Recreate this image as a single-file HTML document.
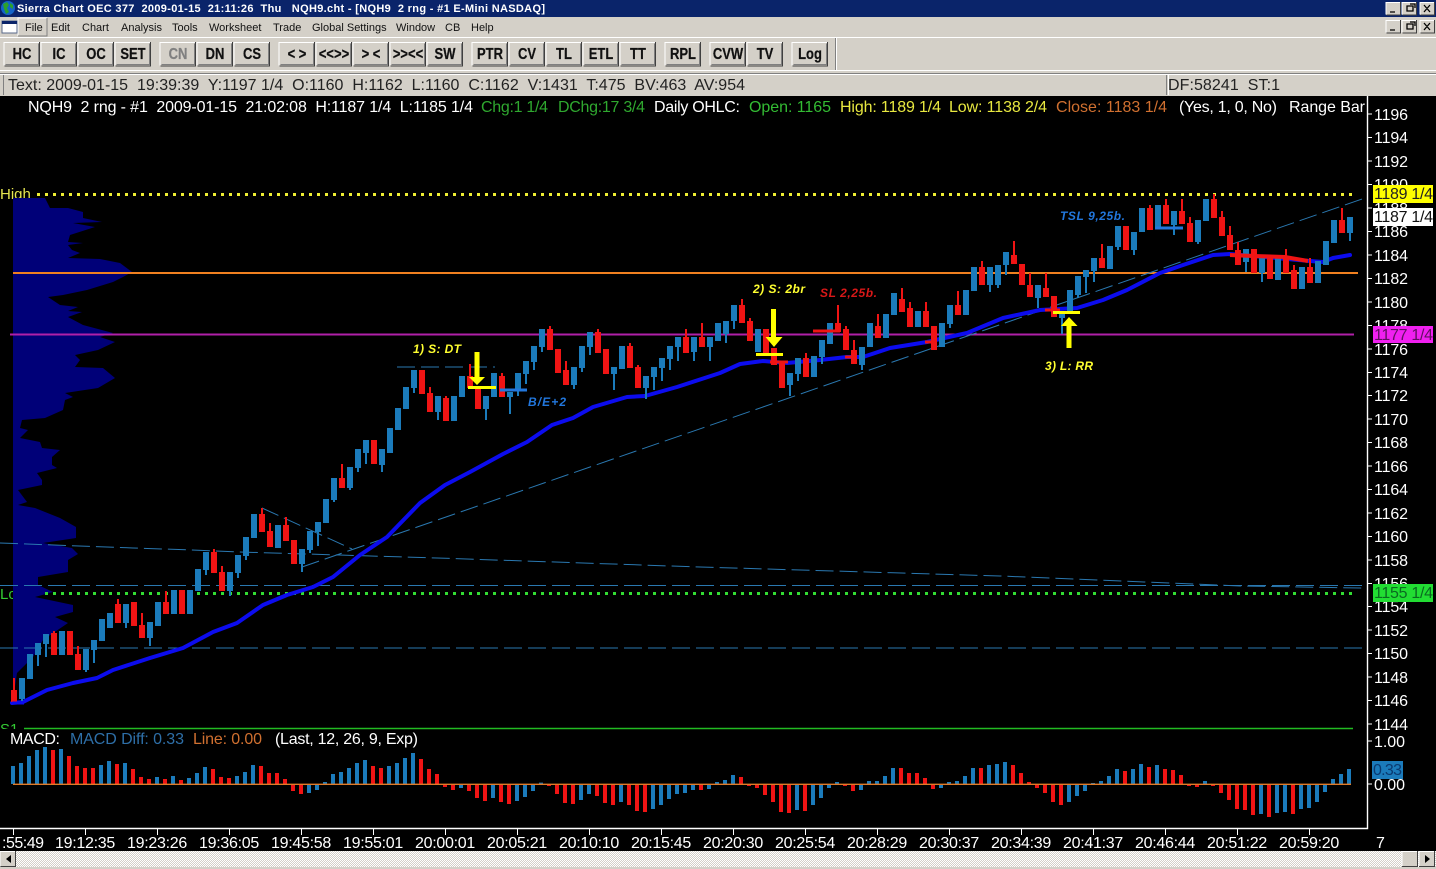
<!DOCTYPE html>
<html><head><meta charset="utf-8"><title>Sierra Chart</title>
<style>
html,body{margin:0;padding:0;background:#000;overflow:hidden}
svg{display:block}
text{font-family:"Liberation Sans",sans-serif;white-space:pre}
.c{font-size:16px;fill:#fff}
.m{font-size:11px;fill:#111}
.b{font-size:13px;font-weight:bold;fill:#111;stroke:#111;stroke-width:.2px;text-anchor:middle}
.a{font-size:12px;font-weight:bold;font-style:italic}
.t{font-size:16px;fill:#fff;text-anchor:middle;letter-spacing:-.28px}
.p{font-size:16px;fill:#fff}
</style></head><body>
<svg width="1436" height="869" viewBox="0 0 1436 869" xmlns="http://www.w3.org/2000/svg">
<defs>
<g id="btn"><rect width="36" height="24" fill="#d4d0c8"/><path d="M0 23.5V.5H35" fill="none" stroke="#fff"/><path d="M.5 24H35.5V0" fill="none" stroke="#404040"/><path d="M1.5 22.5H34.5V1.5" fill="none" stroke="#808080"/></g>
<g id="wb"><rect width="15" height="13" fill="#d4d0c8"/><path d="M0 12.5V.5H14" fill="none" stroke="#fff"/><path d="M.5 13H14.5V0" fill="none" stroke="#404040"/></g>
<pattern id="dith" width="2" height="2" patternUnits="userSpaceOnUse"><rect width="2" height="2" fill="#d4d0c8"/><rect width="1" height="1" fill="#fff"/><rect x="1" y="1" width="1" height="1" fill="#fff"/></pattern>
</defs>

<!-- chrome -->
<rect width="1436" height="96" fill="#d4d0c8"/>
<rect width="1436" height="17" fill="#0a246a"/>
<circle cx="8" cy="8" r="7" fill="#1464c8"/><path d="M3 4l4-2 2 3-2 3 2 4-3 2-2-5zM10 3l3 2 0 4-3-2z" fill="#2ca02c"/>
<text x="17" y="12" font-size="11" font-weight="bold" fill="#fff" textLength="528">Sierra Chart OEC 377  2009-01-15  21:11:26  Thu   NQH9.cht - [NQH9  2 rng - #1 E-Mini NASDAQ]</text>
<use href="#wb" x="1386" y="2"/><use href="#wb" x="1402" y="2"/><use href="#wb" x="1420" y="2"/>
<path d="M1390 12h5M1407 6h6v5h-6zM1410 4h5v4M1424 5l6 7M1430 5l-6 7" stroke="#000" stroke-width="1.3" fill="none"/>
<use href="#wb" x="1386" y="20"/><use href="#wb" x="1402" y="20"/><use href="#wb" x="1420" y="20"/>
<path d="M1390 30h5M1407 24h6v5h-6zM1410 22h5v4M1424 23l6 7M1430 23l-6 7" stroke="#000" stroke-width="1.3" fill="none"/>
<!-- menu -->
<rect x="2" y="21" width="15" height="12" fill="#fff" stroke="#5a6a8a"/><rect x="2" y="21" width="15" height="3" fill="#0a246a"/>
<path d="M18 36V18H47" fill="none" stroke="#fff"/><path d="M47 18V36H18" fill="none" stroke="#808080"/>
<text class="m" x="25" y="31">File</text><text class="m" x="51" y="31">Edit</text><text class="m" x="82" y="31">Chart</text><text class="m" x="121" y="31">Analysis</text><text class="m" x="172" y="31">Tools</text><text class="m" x="209" y="31">Worksheet</text><text class="m" x="273" y="31">Trade</text><text class="m" x="312" y="31">Global Settings</text><text class="m" x="396" y="31">Window</text><text class="m" x="445" y="31">CB</text><text class="m" x="471" y="31">Help</text>
<rect y="37" width="1436" height="1" fill="#fff"/>
<!-- toolbar -->
<g>
<use href="#btn" x="4" y="42"/><use href="#btn" x="41" y="42"/><use href="#btn" x="78" y="42"/><use href="#btn" x="115" y="42"/>
<use href="#btn" x="160" y="42"/><use href="#btn" x="197" y="42"/><use href="#btn" x="234" y="42"/>
<use href="#btn" x="279" y="42"/><use href="#btn" x="316" y="42"/><use href="#btn" x="353" y="42"/><use href="#btn" x="390" y="42"/><use href="#btn" x="427" y="42"/>
<use href="#btn" x="472" y="42"/><use href="#btn" x="509" y="42"/><use href="#btn" x="546" y="42"/><use href="#btn" x="583" y="42"/><use href="#btn" x="620" y="42"/>
<use href="#btn" x="665" y="42"/><use href="#btn" x="710" y="42"/><use href="#btn" x="747" y="42"/><use href="#btn" x="792" y="42"/>
</g>
<g transform="scale(1,1.2)">
<text class="b" x="22" y="49.300">HC</text><text class="b" x="59" y="49.300">IC</text><text class="b" x="96" y="49.300">OC</text><text class="b" x="133" y="49.300">SET</text>
<text class="b" x="178" y="49.300" style="fill:#808080;stroke:#808080">CN</text><text class="b" x="215" y="49.300">DN</text><text class="b" x="252" y="49.300">CS</text>
<text class="b" x="297" y="49.300">&lt; &gt;</text><text class="b" x="334" y="49.300">&lt;&lt;&gt;&gt;</text><text class="b" x="371" y="49.300">&gt; &lt;</text><text class="b" x="408" y="49.300">&gt;&gt;&lt;&lt;</text><text class="b" x="445" y="49.300">SW</text>
<text class="b" x="490" y="49.300">PTR</text><text class="b" x="527" y="49.300">CV</text><text class="b" x="564" y="49.300">TL</text><text class="b" x="601" y="49.300">ETL</text><text class="b" x="638" y="49.300">TT</text>
<text class="b" x="683" y="49.300">RPL</text><text class="b" x="728" y="49.300">CVW</text><text class="b" x="765" y="49.300">TV</text><text class="b" x="810" y="49.300">Log</text>
</g>
<path d="M835.5 38V70" stroke="#808080"/><path d="M836.5 38V70" stroke="#fff"/>
<rect y="70" width="1436" height="1" fill="#fff"/><rect y="73" width="1436" height="1" fill="#808080"/><rect y="74" width="1436" height="1" fill="#fff"/>
<path d="M3.5 75V95" stroke="#808080"/><path d="M1166.5 75V95" stroke="#808080"/><path d="M1168.5 75V95" stroke="#fff"/>
<text x="8" y="90" font-size="16" fill="#222" textLength="737">Text: 2009-01-15  19:39:39  Y:1197 1/4  O:1160  H:1162  L:1160  C:1162  V:1431  T:475  BV:463  AV:954</text>
<text x="1168" y="90" font-size="16" fill="#222" textLength="112">DF:58241  ST:1</text>

<!-- chart bg -->
<rect y="96" width="1436" height="755" fill="#000"/>
<text x="0" y="199" font-size="15" fill="#e6e650">High</text>
<text x="0" y="599" font-size="15" fill="#33cc33">Lo</text>
<text x="0" y="734" font-size="15" fill="#33cc33">S1</text>
<rect x="0" y="729" width="24" height="10" fill="#000"/>
<!-- volume profile -->
<polygon fill="#000078" points="13,198 45,198 50,208 68,208 83,212 83,218 102,222 73,223 95,227 70,235 68,242 83,243 68,245 72,250 80,253 68,258 100,259 120,263 132,272 123,277 113,282 87,290 63,295 48,297 60,305 78,307 68,311 82,312 68,317 83,325 113,333 100,337 115,342 98,350 75,355 80,360 75,367 103,368 115,378 98,388 65,393 73,397 65,400 63,410 45,418 22,420 20,428 28,430 20,438 40,442 42,448 60,450 52,457 52,465 57,468 37,473 42,480 42,485 18,490 27,502 18,505 35,508 60,518 76,527 76,538 43,543 72,548 78,554 68,560 68,572 38,577 38,585 53,592 35,597 73,605 73,612 55,617 68,623 43,640 33,657 17,673 13,700"/>
<!-- horizontal levels -->
<path d="M37 194.5H1352" stroke="#eeee33" stroke-width="3" stroke-dasharray="3 5"/>
<path d="M13 273H1358" stroke="#f08020" stroke-width="2"/>
<path d="M10 334.5H1354" stroke="#b020a8" stroke-width="2"/>
<path d="M45 593.5H1352" stroke="#33dd33" stroke-width="3" stroke-dasharray="3 5"/>
<path d="M24 728.5H1353" stroke="#22bb22" stroke-width="1.5"/>
<!-- thin dashed lines -->
<g fill="none" stroke="#2a78b0" stroke-width="1" stroke-dasharray="18 6">
<path d="M302 567L1365 198"/>
<path d="M262 508L352 549" />
<path d="M0 543L133 548 192 550 240 552 437 558 700 567 1000 576 1240 586 1362 588"/>
<path d="M0 585.5H1362"/>
<path d="M0 648H1362"/>
<path d="M397 367H495"/>
</g>
<!-- EMA -->
<polyline fill="none" stroke="#0c0cee" stroke-width="4" stroke-linejoin="round" stroke-linecap="round" points="12,703 23,702 47,690 73,683 97,678 113,670 150,658 183,648 213,632 237,623 263,605 287,595 313,587 333,577 360,555 387,537 420,503 445,485 470,472 503,454 527,442 552,425 573,418 593,407 627,397 645,396 677,387 720,373 740,364 763,361 787,363 820,360 847,357 863,357 890,348 927,342 940,339 967,333 1003,318 1040,310 1077,308 1103,300 1127,290 1160,273 1183,265 1213,255 1230,254 1310,261 1323,262 1333,258 1350,255"/>
<!-- candles: wicks -->
<path fill="none" stroke="#1b7bbb" stroke-width="2" d="M22 699V701M38 655V666M46 644V657M86 670V672M94 650V663M126 623V628M150 638V646M206 570V575M230 591V596M238 573V578M246 556V560M302 564V572M310 550V553M318 532V546M334 500V502M350 488V490M358 468V472M366 453V464M382 465V472M414 388V393M438 412V420M486 409V420M510 397V414M518 390V396M526 374V384M534 362V370M542 347V352M574 385V389M582 368V372M590 347V355M614 374V390M646 388V399M654 377V390M662 368V381M670 359V370M678 347V361M694 352V361M710 347V361M726 334V343M734 321V329M790 385V396M798 374V381M822 357V364M862 365V370M950 324V328M990 285V292M998 285V288M1006 265V275M1038 298V308M1062 318V334M1078 295V298M1086 277V293M1094 271V282M1118 247V250M1134 250V255M1174 225V235M1198 242V244M1246 262V272M1262 273V282M1350 233V241"/>
<path fill="none" stroke="#f01414" stroke-width="2" d="M14 678V690M54 631V633M78 646V654M118 599V604M142 613V625M166 591V602M214 549V552M222 566V572M262 508V514M270 523V531M286 517V525M342 464V478M430 387V393M446 396V398M470 364V376M502 373V376M550 326V329M566 361V370M598 329V332M630 343V346M638 365V367M686 329V337M702 323V337M742 299V305M750 318V321M806 353V358M838 305V323M846 326V329M854 340V350M878 314V326M902 288V299M910 302V308M926 302V311M958 291V305M982 261V267M1014 241V255M1030 273V285M1046 273V288M1102 244V258M1150 205V208M1166 199V205M1182 199V211M1190 217V223M1214 194V199M1222 211V217M1230 226V235M1238 242V250M1286 249V258M1294 265V270M1310 258V267M1342 208V220"/>
<!-- candles: bodies -->
<path fill="none" stroke="#1b7bbb" stroke-width="6" d="M22 678V699M30 654V679M38 643V655M46 634V644M62 631V655M86 649V670M94 640V650M102 619V641M110 613V628M126 604V623M150 622V638M158 602V626M174 590V614M190 590V614M198 569V591M206 552V570M230 572V591M238 555V573M246 537V556M254 514V538M278 525V548M302 549V564M310 531V550M318 522V532M326 499V523M334 478V500M350 467V488M358 449V468M366 440V453M382 449V465M390 428V453M398 408V430M406 387V409M414 370V388M438 396V412M454 396V421M462 376V397M486 396V409M494 373V397M510 392V397M518 373V390M526 361V374M534 346V362M542 329V347M574 367V385M582 346V368M590 332V347M614 367V374M622 346V369M646 376V388M654 367V377M662 358V368M670 346V359M678 337V347M694 337V352M710 337V347M718 323V341M726 321V334M734 305V321M758 329V352M790 373V385M798 358V374M814 356V377M822 340V357M830 323V344M862 347V365M870 323V347M886 314V338M894 293V315M918 311V327M942 323V347M950 305V324M966 290V315M974 267V291M990 267V285M998 265V285M1006 252V265M1038 285V298M1062 314V318M1070 290V312M1078 276V295M1086 270V277M1094 258V271M1110 246V269M1118 226V247M1134 232V250M1142 208V232M1158 205V229M1174 211V225M1198 220V242M1206 199V221M1246 249V262M1262 258V273M1278 258V280M1302 267V289M1318 261V283M1326 241V265M1334 220V243M1350 217V233"/>
<path fill="none" stroke="#f01414" stroke-width="6" d="M14 690V702M54 633V655M70 631V655M78 654V670M118 604V623M134 602V626M142 625V638M166 602V614M182 590V614M214 552V573M222 572V591M262 514V532M270 531V547M286 525V541M294 540V564M342 478V488M374 440V464M422 370V394M430 393V412M446 398V421M470 376V388M478 387V409M502 376V397M550 329V350M558 349V373M566 370V385M598 332V353M606 349V374M630 346V368M638 367V388M686 337V353M702 337V347M742 305V323M750 321V341M766 329V353M774 348V365M782 362V388M806 358V377M838 323V332M846 329V350M854 350V364M878 326V338M902 299V312M910 308V327M926 311V327M934 326V350M958 305V315M982 267V285M1014 255V264M1022 264V285M1030 285V297M1046 288V297M1054 296V317M1102 258V268M1126 226V250M1150 208V230M1166 205V224M1182 211V224M1190 223V242M1214 199V218M1222 217V236M1230 235V250M1238 250V265M1254 249V273M1270 258V279M1286 258V273M1294 270V289M1310 267V283M1342 220V233"/>
<path d="M12 703H24" stroke="#0c0cee" stroke-width="3"/>
<!-- annotation lines -->
<path fill="none" stroke="#f01414" stroke-width="3" d="M813 331H840M845 357H857M925 342H937M770 362H788M1045 310H1060"/>
<polyline fill="none" stroke="#f01414" stroke-width="4" points="1230,255 1253,256 1285,257 1308,261"/>
<path fill="none" stroke="#2277dd" stroke-width="3" d="M500 390H527M1155 228H1183"/>
<!-- arrows -->
<g fill="#ffff00">
<path d="M474.500 352h5v25h5.500l-8 8-8-8h5.500z"/><rect x="468" y="386" width="28" height="3"/>
<path d="M771 309h5v28h6.500l-8.500 10-8.500-10h5.500z"/><rect x="756" y="353" width="27" height="3"/>
<path d="M1066.500 348h5v-22h6l-8.500-9-8 9h5.500z"/><rect x="1053" y="311" width="27" height="3"/>
</g>
<text class="a" x="413" y="353" fill="#ffff30" textLength="48">1) S: DT</text>
<text class="a" x="753" y="293" fill="#ffff30" textLength="52">2) S: 2br</text>
<text class="a" x="820" y="297" fill="#d81818" textLength="57">SL 2,25b.</text>
<text class="a" x="1045" y="370" fill="#ffff30" textLength="48">3) L: RR</text>
<text class="a" x="1060" y="220" fill="#2277dd" textLength="65">TSL 9,25b.</text>
<text class="a" x="528" y="406" fill="#2277dd" textLength="38">B/E+2</text>

<!-- header -->
<text class="c" x="28" y="112" textLength="445">NQH9  2 rng - #1  2009-01-15  21:02:08  H:1187 1/4  L:1185 1/4</text>
<text class="c" x="481" y="112" style="fill:#2fa82f" textLength="67">Chg:1 1/4</text>
<text class="c" x="558" y="112" style="fill:#2fa82f" textLength="87">DChg:17 3/4</text>
<text class="c" x="654" y="112" textLength="86">Daily OHLC:</text>
<text class="c" x="749" y="112" style="fill:#33bb33" textLength="82">Open: 1165</text>
<text class="c" x="840" y="112" style="fill:#e8e840" textLength="101">High: 1189 1/4</text>
<text class="c" x="949" y="112" style="fill:#e8e840" textLength="98">Low: 1138 2/4</text>
<text class="c" x="1056" y="112" style="fill:#d07030" textLength="111">Close: 1183 1/4</text>
<text class="c" x="1179" y="112" textLength="98">(Yes, 1, 0, No)</text>
<text class="c" x="1289" y="112" textLength="76">Range Bar</text>

<!-- MACD -->
<text class="c" x="10" y="744" textLength="50">MACD:</text>
<text class="c" x="70" y="744" style="fill:#2e6fa8" textLength="114">MACD Diff: 0.33</text>
<text class="c" x="193" y="744" style="fill:#d07030" textLength="69">Line: 0.00</text>
<text class="c" x="275" y="744" textLength="143">(Last, 12, 26, 9, Exp)</text>
<g transform="translate(0,720) scale(1,.33333)" fill="none" stroke-width="4">
<path stroke="#1b7bbb" d="M13 192V138M21 192V129M29 192V108M37 192V90M45 192V81M61 192V87M101 192V135M109 192V123M125 192V129M157 192V171M173 192V168M189 192V174M197 192V159M205 192V141M237 192V168M245 192V156M253 192V135M309 192V219M317 192V210M325 192V186M333 192V162M341 192V156M349 192V144M357 192V129M365 192V120M389 192V138M397 192V129M405 192V114M413 192V99M461 192V204M493 192V234M517 192V243M525 192V231M533 192V213M541 192V188M581 192V240M589 192V222M621 192V246M653 192V267M661 192V255M669 192V237M677 192V222M685 192V219M693 192V210M709 192V207M717 192V186M725 192V180M733 192V165M797 192V270M813 192V255M821 192V234M829 192V204M837 192V186M861 192V210M869 192V183M877 192V183M885 192V168M893 192V144M941 192V204M949 192V186M957 192V183M965 192V168M973 192V144M989 192V135M997 192V132M1005 192V126M1069 192V246M1077 192V228M1085 192V213M1093 192V189M1101 192V183M1109 192V168M1117 192V147M1133 192V147M1141 192V132M1157 192V135M1205 192V183M1261 192V282M1277 192V279M1285 192V276M1301 192V267M1309 192V264M1317 192V246M1325 192V216M1333 192V177M1341 192V162M1349 192V147"/>
<path stroke="#f01414" d="M53 192V90M69 192V108M77 192V138M85 192V144M93 192V144M117 192V132M133 192V147M141 192V171M149 192V177M165 192V177M181 192V180M213 192V147M221 192V171M229 192V174M261 192V138M269 192V159M277 192V159M285 192V177M293 192V213M301 192V222M373 192V138M381 192V144M421 192V117M429 192V147M437 192V162M445 192V201M453 192V210M469 192V213M477 192V234M485 192V243M501 192V246M509 192V252M549 192V198M557 192V222M565 192V249M573 192V252M597 192V228M605 192V249M613 192V255M629 192V255M637 192V273M645 192V276M701 192V210M741 192V171M749 192V198M757 192V204M765 192V225M773 192V246M781 192V276M789 192V279M805 192V273M845 192V198M853 192V213M901 192V144M909 192V159M917 192V159M925 192V174M933 192V207M981 192V144M1013 192V135M1021 192V159M1029 192V186M1037 192V204M1045 192V219M1053 192V246M1061 192V255M1125 192V153M1149 192V141M1165 192V147M1173 192V150M1181 192V165M1189 192V198M1197 192V201M1213 192V198M1221 192V219M1229 192V240M1237 192V267M1245 192V270M1253 192V285M1269 192V291M1293 192V282"/>
</g>
<path d="M13 784.300H1351" stroke="#e07a28" stroke-width="1.300"/>

<!-- axes -->
<path d="M1367.500 96V828.500H0" fill="none" stroke="#fff" stroke-width="1.400"/>
<path stroke="#fff" d="M1367 114h5M1367 137.500h5M1367 161h5M1367 184.500h5M1367 208h5M1367 231.500h5M1367 255h5M1367 278.500h5M1367 302h5M1367 325.500h5M1367 349h5M1367 372.500h5M1367 395.500h5M1367 419h5M1367 442.500h5M1367 466h5M1367 489.500h5M1367 513h5M1367 536.500h5M1367 560h5M1367 583.500h5M1367 606.500h5M1367 630h5M1367 653.500h5M1367 677h5M1367 700.500h5M1367 724h5M1367 741h5M1367 784h5"/>
<g>
<text class="p" x="1374" y="120" textLength="34">1196</text><text class="p" x="1374" y="143" textLength="34">1194</text><text class="p" x="1374" y="167" textLength="34">1192</text><text class="p" x="1374" y="190" textLength="34">1190</text><text class="p" x="1374" y="214" textLength="34">1188</text><text class="p" x="1374" y="237" textLength="34">1186</text><text class="p" x="1374" y="261" textLength="34">1184</text><text class="p" x="1374" y="284" textLength="34">1182</text><text class="p" x="1374" y="308" textLength="34">1180</text><text class="p" x="1374" y="331" textLength="34">1178</text><text class="p" x="1374" y="355" textLength="34">1176</text><text class="p" x="1374" y="378" textLength="34">1174</text><text class="p" x="1374" y="401" textLength="34">1172</text><text class="p" x="1374" y="425" textLength="34">1170</text><text class="p" x="1374" y="448" textLength="34">1168</text><text class="p" x="1374" y="472" textLength="34">1166</text><text class="p" x="1374" y="495" textLength="34">1164</text><text class="p" x="1374" y="519" textLength="34">1162</text><text class="p" x="1374" y="542" textLength="34">1160</text><text class="p" x="1374" y="566" textLength="34">1158</text><text class="p" x="1374" y="589" textLength="34">1156</text><text class="p" x="1374" y="612" textLength="34">1154</text><text class="p" x="1374" y="636" textLength="34">1152</text><text class="p" x="1374" y="659" textLength="34">1150</text><text class="p" x="1374" y="683" textLength="34">1148</text><text class="p" x="1374" y="706" textLength="34">1146</text><text class="p" x="1374" y="730" textLength="34">1144</text>
<text class="p" x="1374" y="747" textLength="31">1.00</text><text class="p" x="1374" y="790" textLength="31">0.00</text>
</g>
<rect x="1373" y="185" width="60" height="18" fill="#ffff00"/><text x="1374" y="199" font-size="16" fill="#222" textLength="59">1189 1/4</text>
<rect x="1373" y="208" width="60" height="18" fill="#fff"/><text x="1374" y="222" font-size="16" fill="#111" textLength="59">1187 1/4</text>
<rect x="1373" y="326" width="60" height="17" fill="#f020f0"/><text x="1374" y="340" font-size="16" fill="#601060" textLength="59">1177 1/4</text>
<rect x="1373" y="584" width="60" height="18" fill="#22dd33"/><text x="1374" y="598" font-size="16" fill="#0a6a20" textLength="59">1155 1/4</text>
<rect x="1372" y="761" width="31" height="18" fill="#1b7bbb"/><text x="1373" y="775" font-size="16" fill="#0a3a70" textLength="29">0.33</text>

<!-- time axis -->
<path stroke="#fff" d="M13.500 828v7M85.500 828v7M157.500 828v7M229.500 828v7M301.500 828v7M373.500 828v7M445.500 828v7M517.500 828v7M589.500 828v7M661.500 828v7M733.500 828v7M805.500 828v7M877.500 828v7M949.500 828v7M1021.500 828v7M1093.500 828v7M1165.500 828v7M1237.500 828v7M1309.500 828v7"/>
<text class="p" x="2" y="848" textLength="42">:55:49</text>
<g>
<text class="t" x="85" y="848">19:12:35</text><text class="t" x="157" y="848">19:23:26</text><text class="t" x="229" y="848">19:36:05</text><text class="t" x="301" y="848">19:45:58</text><text class="t" x="373" y="848">19:55:01</text><text class="t" x="445" y="848">20:00:01</text><text class="t" x="517" y="848">20:05:21</text><text class="t" x="589" y="848">20:10:10</text><text class="t" x="661" y="848">20:15:45</text><text class="t" x="733" y="848">20:20:30</text><text class="t" x="805" y="848">20:25:54</text><text class="t" x="877" y="848">20:28:29</text><text class="t" x="949" y="848">20:30:37</text><text class="t" x="1021" y="848">20:34:39</text><text class="t" x="1093" y="848">20:41:37</text><text class="t" x="1165" y="848">20:46:44</text><text class="t" x="1237" y="848">20:51:22</text><text class="t" x="1309" y="848">20:59:20</text>
</g>
<text class="p" x="1376" y="848">7</text>

<!-- scrollbar -->
<rect y="851" width="1436" height="18" fill="#d4d0c8"/>
<rect y="851" width="1436" height="16" fill="url(#dith)"/>
<g><rect x="0" y="851" width="16" height="16" fill="#d4d0c8"/><path d="M0 866V851.500H15" fill="none" stroke="#fff"/><path d="M.5 866.500H15.500V851" fill="none" stroke="#404040"/><path d="M11 855v8l-5-4z" fill="#000"/></g>
<g><rect x="1402" y="851" width="16" height="16" fill="#d4d0c8"/><path d="M1402 866V851.500H1417" fill="none" stroke="#fff"/><path d="M1402 866.500H1417.500V851" fill="none" stroke="#404040"/></g>
<g><rect x="1419" y="851" width="16" height="16" fill="#d4d0c8"/><path d="M1419 866V851.500H1434" fill="none" stroke="#fff"/><path d="M1419 866.500H1434.500V851" fill="none" stroke="#404040"/><path d="M1425 855v8l5-4z" fill="#000"/></g>
</svg>
</body></html>
